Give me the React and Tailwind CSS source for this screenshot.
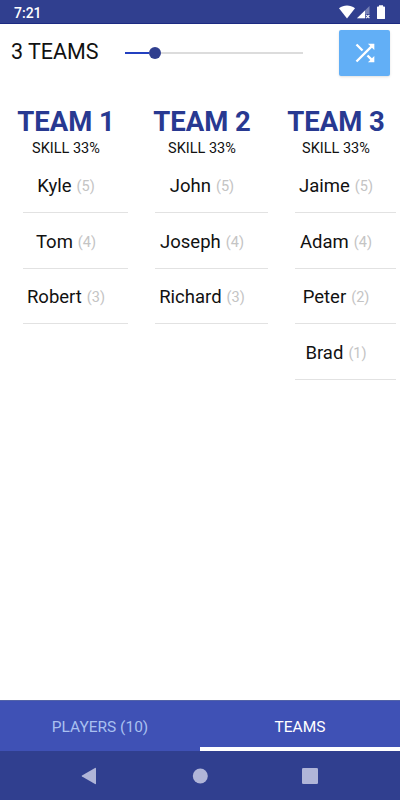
import React, { useState } from 'react';

const teams = [
  {
    id: 1,
    skill: 33,
    width: 'w-[124px]',
    players: [
      { name: 'Kyle', skill: 5 },
      { name: 'Tom', skill: 4 },
      { name: 'Robert', skill: 3 }
    ]
  },
  {
    id: 2,
    skill: 33,
    width: 'w-[132px]',
    players: [
      { name: 'John', skill: 5 },
      { name: 'Joseph', skill: 4 },
      { name: 'Richard', skill: 3 }
    ]
  },
  {
    id: 3,
    skill: 33,
    width: 'w-[120px]',
    players: [
      { name: 'Jaime', skill: 5 },
      { name: 'Adam', skill: 4 },
      { name: 'Peter', skill: 2 },
      { name: 'Brad', skill: 1 }
    ]
  }
];

const StatusBar = () => (
  <div className="flex h-6 shrink-0 items-center justify-between border-b border-[#1c2a82] bg-[#303f8f] px-[14px] text-white">
    <span className="pt-[2px] text-[14px] font-medium leading-6">7:21</span>
    <svg width="48" height="16" viewBox="0 0 48 16" fill="currentColor">
      <path d="M1 4.3C5.8.6 12.2.6 17 4.3L9 14.5z" />
      <path d="M31.5 2v8h-4v4.3h-8.5z" opacity=".35" />
      <path d="M27 6.5v7.8h-8z" />
      <path d="M28.2 10.8l3.2 3.3M31.4 10.8l-3.2 3.3" stroke="currentColor" strokeWidth="1.2" />
      <path d="M41 1.2h4v1.3h1.2q.8 0 .8.8v10.900q0 .9-.8.9h-6.400q-.8 0-.8-.9V3.3q0-.8.8-.8H41z" />
    </svg>
  </div>
);

const TeamSlider = () => (
  <div className="flex w-[178px] items-center">
    <div className="h-[2px] w-6 bg-[#2340c0]" />
    <div className="h-3 w-3 shrink-0 rounded-full bg-[#303f8f]" />
    <div className="h-[2px] flex-1 bg-[#dcdcdc]" />
  </div>
);

const Team = ({ team }) => (
  <div className={team.width}>
    <h2 className="text-center text-[27.5px] font-bold leading-8 text-[#283991]">TEAM {team.id}</h2>
    <p className="text-center text-[14.5px] leading-[22px] text-[#111]">SKILL {team.skill}%</p>
    <ul className="-mt-[3px]">
      {team.players.map((player) => (
        <li
          key={player.name}
          className="ml-[19px] h-[55.8px] whitespace-nowrap border-b border-[#e2e2e2] pr-[19px] pt-[16.8px] text-center leading-6"
        >
          <span className="text-[18.5px] text-[#111]">{player.name}</span>
          <span className="ml-[5px] align-[1px] text-[14.5px] text-[#c4c4c4]">({player.skill})</span>
        </li>
      ))}
    </ul>
  </div>
);

const NavBar = () => (
  <div className="flex h-[49px] shrink-0 items-center justify-center bg-[#303f8f] text-[#b0b5d8]">
    <svg width="240" height="20" viewBox="0 0 240 20" fill="currentColor">
      <path d="M16 2.5v15q0 1-1 .5L2 10.6q-.9-.6 0-1.2L15 2q1-.5 1 .5z" />
      <circle cx="120.3" cy="10" r="7.5" />
      <rect x="222" y="2" width="16" height="16" rx="1.3" />
    </svg>
  </div>
);

const App = () => {
  const [tab, setTab] = useState('teams');

  return (
    <div className="flex h-[800px] w-[400px] flex-col overflow-hidden bg-white font-['Roboto',sans-serif]">
      <StatusBar />

      {/* Team count and shuffle */}
      <div className="flex h-[57px] shrink-0 items-center pl-[11px] pr-[10px]">
        <span className="w-[114px] pb-px text-[21.5px] leading-6 text-[#111]">{teams.length} TEAMS</span>
        <TeamSlider />
        <button className="ml-auto flex h-[46px] w-[51px] items-center justify-center rounded-[2px] bg-[#62aff6] text-white shadow-sm">
          <svg width="28" height="28" viewBox="0 0 24 24" fill="currentColor">
            <path d="M10.59 9.17L5.41 4 4 5.41l5.17 5.17 1.42-1.41zM14.5 4l2.04 2.04L4 18.59 5.41 20 17.96 7.46 20 9.5V4h-5.5zm.33 9.41l-1.41 1.41 3.13 3.13L14.5 20H20v-5.5l-2.04 2.04-3.13-3.13z" />
          </svg>
        </button>
      </div>

      {/* Teams */}
      <div className="flex flex-1 items-start gap-2 px-1 pt-[25px]">
        {teams.map((team) => (
          <Team key={team.id} team={team} />
        ))}
      </div>

      {/* Tabs */}
      <div className="flex h-[51px] shrink-0 border-t border-[#5363a8] bg-[#3f51b5] text-[15.5px]">
        <button
          onClick={() => setTab('players')}
          className={`flex-1 border-b-[4px] pt-[7px] ${tab === 'players' ? 'border-white text-white' : 'border-transparent text-[#a9c0f0]'}`}
        >
          PLAYERS (10)
        </button>
        <button
          onClick={() => setTab('teams')}
          className={`flex-1 border-b-[4px] pt-[7px] ${tab === 'teams' ? 'border-white text-white' : 'border-transparent text-[#a9c0f0]'}`}
        >
          TEAMS
        </button>
      </div>

      <NavBar />
    </div>
  );
};

export default App;
